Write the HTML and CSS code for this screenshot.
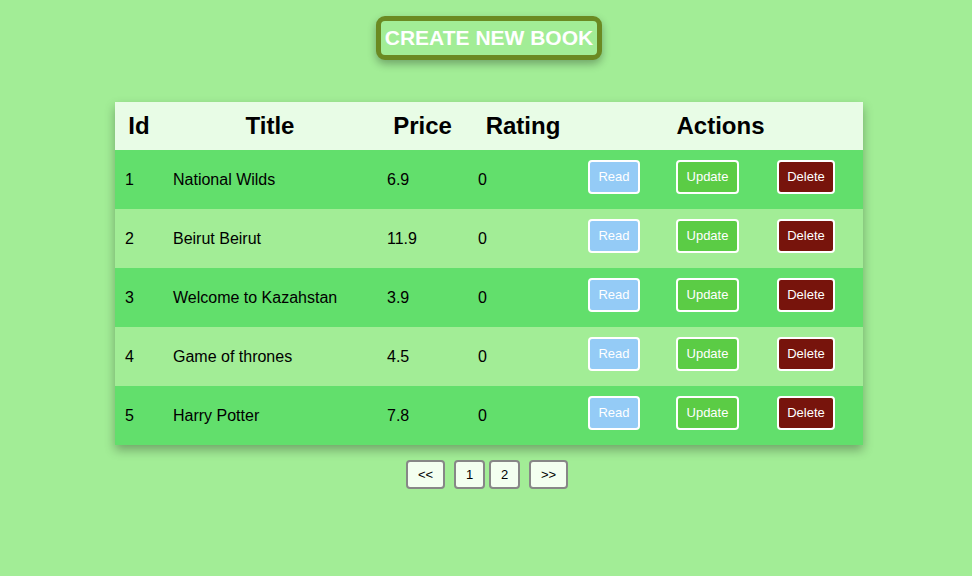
FILE: index.html
```html
<!DOCTYPE html>
<html>
<head>
<meta charset="utf-8">
<link rel="stylesheet" href="styles.css">
</head>
<body>
<div class="page">
  <button class="create">CREATE NEW BOOK</button>
  <table class="books">
    <colgroup>
      <col class="c-id"><col class="c-title"><col class="c-price"><col class="c-rating"><col class="c-read"><col class="c-update"><col class="c-delete">
    </colgroup>
    <thead>
      <tr><th>Id</th><th>Title</th><th>Price</th><th>Rating</th><th colspan="3">Actions</th></tr>
    </thead>
    <tbody>
      <tr class="dark"><td>1</td><td>National Wilds</td><td>6.9</td><td>0</td><td><button class="act read">Read</button></td><td><button class="act update">Update</button></td><td><button class="act delete">Delete</button></td></tr>
      <tr class="light"><td>2</td><td>Beirut Beirut</td><td>11.9</td><td>0</td><td><button class="act read">Read</button></td><td><button class="act update">Update</button></td><td><button class="act delete">Delete</button></td></tr>
      <tr class="dark"><td>3</td><td>Welcome to Kazahstan</td><td>3.9</td><td>0</td><td><button class="act read">Read</button></td><td><button class="act update">Update</button></td><td><button class="act delete">Delete</button></td></tr>
      <tr class="light"><td>4</td><td>Game of thrones</td><td>4.5</td><td>0</td><td><button class="act read">Read</button></td><td><button class="act update">Update</button></td><td><button class="act delete">Delete</button></td></tr>
      <tr class="dark"><td>5</td><td>Harry Potter</td><td>7.8</td><td>0</td><td><button class="act read">Read</button></td><td><button class="act update">Update</button></td><td><button class="act delete">Delete</button></td></tr>
    </tbody>
  </table>
  <div class="pager">
    <button class="pg wide">&lt;&lt;</button>
    <div class="nums">
      <button class="pg">1</button>
      <button class="pg">2</button>
    </div>
    <button class="pg wide">&gt;&gt;</button>
  </div>
</div>
</body>
</html>
```

FILE: styles.css
```css
* { box-sizing: border-box; }
html, body { margin: 0; padding: 0; }
body {
  background: #a2ed96;
  font-family: "Liberation Sans", Arial, sans-serif;
  width: 972px;
  height: 576px;
  overflow: hidden;
}
.page {
  display: flex;
  flex-direction: column;
  align-items: center;
  padding-top: 16px;
}
.create {
  width: 226px;
  height: 44px;
  margin-left: 6px;
  border: 5px solid #6b8a22;
  border-radius: 9px;
  background: #a2ed96;
  color: #ffffff;
  font-family: "Liberation Sans", Arial, sans-serif;
  font-weight: bold;
  font-size: 21px;
  padding: 0;
  box-shadow: 0 4px 8px rgba(0,0,0,0.3);
}
.books {
  margin-top: 42px;
  margin-left: 6px;
  width: 748px;
  border-collapse: collapse;
  table-layout: fixed;
  box-shadow: 0 5px 10px rgba(0,0,0,0.3);
}
.c-id { width: 48px; }
.c-title { width: 214px; }
.c-price { width: 91px; }
.c-rating { width: 110px; }
.c-read { width: 88px; }
.c-update { width: 102px; }
.c-delete { width: 95px; }
.books thead tr { background: #e8fce6; height: 48px; }
.books th {
  font-size: 24px;
  font-weight: bold;
  color: #000;
  text-align: center;
  padding: 0;
}
.books tbody tr { height: 59px; }
.books tr.dark { background: #62df6c; }
.books tr.light { background: #a2ed96; }
.books td {
  font-size: 16px;
  color: #000;
  padding: 0 0 0 10px;
  text-align: left;
  vertical-align: middle;
}
.act {
  height: 34px;
  border: 2px solid #ffffff;
  border-radius: 4px;
  color: #ffffff;
  font-family: "Liberation Sans", Arial, sans-serif;
  font-size: 13px;
  padding: 0 8px;
  margin-top: -6px;
  display: block;
}
.read { background: #94cbf6; width: 52px; }
.update { background: #5bcc45; width: 63px; }
.delete { background: #77140c; width: 58px; margin-left: -1px; }
.pager {
  margin-top: 15px;
  display: flex;
  gap: 9px;
  margin-left: 2px;
}
.nums { display: flex; gap: 4px; }
.pg {
  height: 29px;
  width: 31px;
  border: 2px solid #878787;
  border-radius: 4px;
  background: #f3fff0;
  color: #000;
  font-family: "Liberation Sans", Arial, sans-serif;
  font-size: 13px;
  padding: 0;
}
.pg.wide { width: 39px; }
```
